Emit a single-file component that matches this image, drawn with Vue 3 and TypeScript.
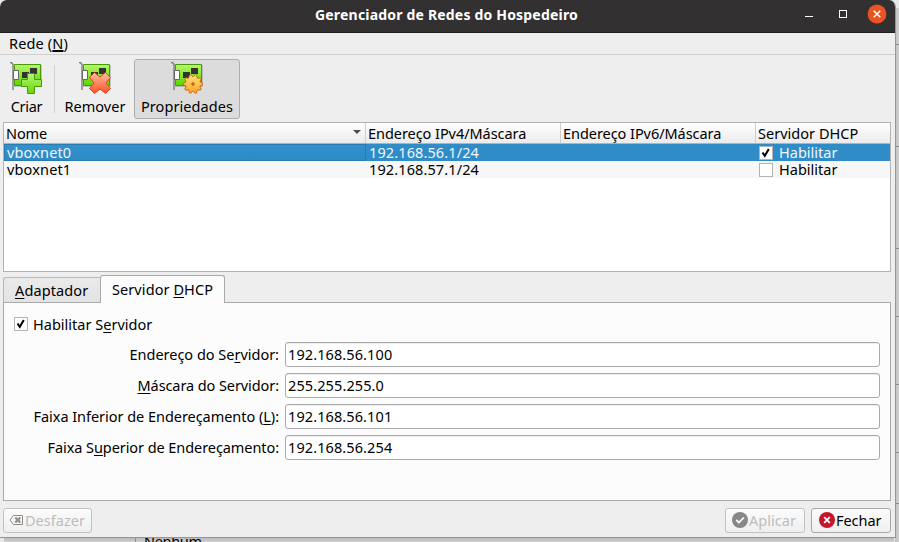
<script setup lang="ts">
import { ref } from 'vue'

interface Network { name: string; ipv4: string; enabled: boolean }
interface Field { pre: string; key: string; post: string; width: number; value: string; valueWidth: number }

const networks = ref<Network[]>([
  { name: 'vboxnet0', ipv4: '192.168.56.1/24', enabled: true },
  { name: 'vboxnet1', ipv4: '192.168.57.1/24', enabled: false },
])
const selected = ref(0)
const serverEnabled = ref(true)
const fields = ref<Field[]>([
  { pre: 'Endereço do Se', key: 'r', post: 'vidor:', width: 149.5, value: '192.168.56.100', valueWidth: 104.3 },
  { pre: '', key: 'M', post: 'áscara do Servidor:', width: 141.5, value: '255.255.255.0', valueWidth: 96 },
  { pre: 'Faixa Inferior de Endereçamento (', key: 'L', post: '):', width: 245.5, value: '192.168.56.101', valueWidth: 104.3 },
  { pre: 'Faixa S', key: 'u', post: 'perior de Endereçamento:', width: 231.5, value: '192.168.56.254', valueWidth: 104.3 },
])
const rules = [44, 146, 248, 316, 384, 452, 503]

// Outline of a cog with ten blunt teeth, centred on (22, 22).
const teeth = 10
const cog = 'M' + Array.from({ length: teeth * 4 }, (_, i) => {
  const radius = i % 4 < 2 ? 9.6 : 7.6
  const angle = ((i - 0.5) / (teeth * 4)) * Math.PI * 2
  return `${(22 + radius * Math.cos(angle)).toFixed(2)} ${(22 + radius * Math.sin(angle)).toFixed(2)}`
}).join('L') + 'Z'

// Tracks a label so that it takes the given advance width.
const vFit = {
  mounted(el: HTMLElement, binding: { value: number }) {
    const count = (el.textContent ?? '').length
    const natural = el.getBoundingClientRect().width
    el.style.letterSpacing = `${(binding.value - natural) / count}px`
  },
}
</script>

<template>
  <div class="screen">
    <svg class="desktop" width="899" height="542">
      <defs>
        <linearGradient id="shadeR"><stop offset="0" stop-color="#bdbdbd" /><stop offset="1" stop-color="#d2d2d2" /></linearGradient>
        <linearGradient id="shadeB" x2="0" y2="1"><stop offset="0" stop-color="#b5b5b5" /><stop offset="1" stop-color="#cfcfcf" /></linearGradient>
      </defs>
      <rect width="899" height="542" fill="#e8e8e8" />
      <rect x="895" y="8" width="4" height="534" fill="url(#shadeR)" />
      <rect x="4" y="537" width="890" height="5" fill="url(#shadeB)" />
      <rect v-for="y in rules" :key="y" x="895" :y="y" width="4" height="1" fill="#8e8e8e" />
      <rect x="135" y="537" width="1" height="5" fill="#8e8e8e" />
      <text x="144" y="547" textLength="58">Nenhum</text>
    </svg>

    <main class="window">
      <header class="titlebar">
        <span v-fit="263" class="t title">Gerenciador de Redes do Hospedeiro</span>
        <svg class="controls" width="90" height="28" viewBox="0 0 90 28">
          <path d="M5 16.500h8" stroke="#fff" />
          <rect x="39.500" y="10.500" width="7" height="7" fill="none" stroke="#fff" />
          <circle cx="77" cy="14" r="9.400" fill="#e95420" />
          <path d="M73.700 10.700l6.600 6.600m0-6.600l-6.600 6.600" stroke="#fff" stroke-width="1.500" />
        </svg>
      </header>

      <nav class="menubar"><span v-fit="59" class="t menu">Rede (<u>N</u>)</span></nav>

      <svg width="0" height="0" class="defs">
        <defs>
          <linearGradient id="card" x2="0" y2="1"><stop offset="0" stop-color="#b4f766" /><stop offset="1" stop-color="#5fd400" /></linearGradient>
          <linearGradient id="plus" x2="0" y2="1"><stop offset="0" stop-color="#b8f57c" /><stop offset="1" stop-color="#66d800" /></linearGradient>
          <linearGradient id="red" x2="0" y2="1"><stop offset="0" stop-color="#ffbfa0" /><stop offset="1" stop-color="#ff5028" /></linearGradient>
          <linearGradient id="gold" x2="0" y2="1"><stop offset="0" stop-color="#ffe680" /><stop offset="1" stop-color="#ffa024" /></linearGradient>
          <symbol id="nic" viewBox="0 0 32 32">
            <path d="M4 3h28v22H4z" fill="#8b978b" opacity=".45" />
            <path d="M4.500 2.500h26v21h-26z" fill="url(#card)" stroke="#479b0b" />
            <path d="M0 .5h1.500l1.500 2V28" fill="none" stroke="#777" stroke-width="1.300" />
            <path d="M3.500 8.500h5v9h-5z" fill="#fff" stroke="#666" />
            <path d="M20 6h7v6h-7zM12 10h7v6h-7z" fill="#333" />
          </symbol>
        </defs>
      </svg>

      <section class="toolbar">
        <button class="tool create">
          <svg class="ico" width="32" height="32" viewBox="0 0 32 32"><use href="#nic" width="32" height="32" /><path d="M17.500 11.500h7v6h7v7h-7v7h-7v-7h-6v-7h6z" fill="url(#plus)" stroke="#479b0b" /></svg>
          <span v-fit="32.5" class="t">Criar</span>
        </button>
        <i class="sep" />
        <button class="tool remove">
          <svg class="ico" width="32" height="32" viewBox="0 0 32 32"><use href="#nic" width="32" height="32" /><path d="M15.500 10.500L21 15l5.500-4.500 5 5L27 21l4.500 5.500-5 5L21 27l-5.500 4.500-5-5L15 21l-4.500-5.500z" fill="url(#red)" stroke="#d9431a" stroke-linejoin="round" /></svg>
          <span v-fit="61" class="t">Remover</span>
        </button>
        <button class="tool props">
          <svg class="ico" width="32" height="32" viewBox="0 0 32 32">
            <use href="#nic" width="32" height="32" />
            <path :d="cog" fill="url(#gold)" stroke="#d35b0c" stroke-width=".9" stroke-linejoin="round" />
            <circle cx="22" cy="22" r="1.700" fill="#d35b0c" />
          </svg>
          <span v-fit="92" class="t">Propriedades</span>
        </button>
      </section>

      <section class="table">
        <div class="row head">
          <div class="cell"><span v-fit="41" class="t">Nome</span><i class="arrow" /></div>
          <div class="cell"><span v-fit="158.3" class="t">Endereço IPv4/Máscara</span></div>
          <div class="cell"><span v-fit="158.3" class="t">Endereço IPv6/Máscara</span></div>
          <div class="cell"><span v-fit="100.3" class="t">Servidor DHCP</span></div>
        </div>
        <div v-for="(n, i) in networks" :key="n.name" class="row item" :class="{ selected: i === selected }" @click="selected = i">
          <div class="cell"><span v-fit="64.3" class="t">{{ n.name }}</span></div>
          <div class="cell"><span v-fit="110" class="t">{{ n.ipv4 }}</span></div>
          <div class="cell" />
          <div class="cell">
            <span class="check" @click.stop="n.enabled = !n.enabled"><svg v-if="n.enabled" width="12" height="12" viewBox="0 0 12 12"><path d="M2.500 5.500l2.300 3.300L8.800 2" /></svg></span>
            <span v-fit="58.5" class="t">Habilitar</span>
          </div>
        </div>
      </section>

      <div class="tabs">
        <div class="tab"><span v-fit="73.3" class="t"><u>A</u>daptador</span></div>
        <div class="tab active"><span v-fit="101" class="t">Servidor <u>D</u>HCP</span></div>
      </div>
      <section class="pane">
        <label class="enable" @click="serverEnabled = !serverEnabled">
          <span class="check"><svg v-if="serverEnabled" width="12" height="12" viewBox="0 0 12 12"><path d="M2.500 5.500l2.300 3.300L8.800 2" /></svg></span>
          <span v-fit="119.300" class="t">Habilitar S<u>e</u>rvidor</span>
        </label>
        <div v-for="f in fields" :key="f.pre" class="field">
          <div class="label"><span v-fit="f.width" class="t">{{ f.pre }}<u>{{ f.key }}</u>{{ f.post }}</span></div>
          <div class="input"><span v-fit="f.valueWidth" class="t">{{ f.value }}</span></div>
        </div>
      </section>

      <footer class="actions">
        <button class="btn undo disabled">
          <svg width="15" height="12" viewBox="0 0 15 12"><path d="M4.500 1.500h9v9h-9L1 6z" fill="none" stroke="#8c8c8c" /><path d="M6.300 3.500l5 5m0-5l-5 5" stroke="#8c8c8c" stroke-width="2" /></svg>
          <span v-fit="60" class="t">Desfazer</span>
        </button>
        <button class="btn apply disabled">
          <svg width="16" height="16" viewBox="0 0 16 16"><circle cx="8" cy="8" r="8" fill="#888" /><path d="M4.200 7.800l2.700 2.700 5-5" fill="none" stroke="#fff" stroke-width="1.700" /></svg>
          <span v-fit="47" class="t">Aplicar</span>
        </button>
        <button class="btn close">
          <svg width="16" height="16" viewBox="0 0 16 16"><circle cx="8" cy="8" r="8" fill="#c7162b" /><path d="M5.200 5.200l5.600 5.600m0-5.600l-5.600 5.600" stroke="#fff" stroke-width="1.800" /></svg>
          <span v-fit="45.5" class="t">Fechar</span>
        </button>
      </footer>
    </main>
  </div>
</template>

<style>
body { overflow: hidden; }
</style>

<style scoped>
* { box-sizing: border-box; }
.screen { position: relative; width: 899px; height: 542px; overflow: hidden; font: 14.5px/20px "Noto Sans", "Open Sans", sans-serif; color: #000; }
.desktop { position: absolute; left: 0; top: 0; display: block; }
.t { display: inline-block; flex: none; white-space: pre; }
u { text-decoration: underline; text-decoration-thickness: 1px; text-underline-offset: 2px; text-decoration-skip-ink: none; }
button { font: inherit; color: inherit; margin: 0; }
.window { position: relative; width: 896px; height: 538px; display: flex; flex-direction: column; background: #eee; border-right: 1px solid #969696; border-bottom: 1px solid #969696; border-radius: 7px 7px 0 0; overflow: hidden; }
.titlebar { height: 33px; flex: none; position: relative; background: #333031; border-bottom: 1px solid #1f1e1e; color: #fff; display: flex; padding: 5px 0 0 315px; font-weight: 700; font-size: 14px; }
.controls { position: absolute; left: 800px; top: 0; }
.menubar { height: 22px; flex: none; border-bottom: 1px solid #d0d0d0; padding: 0 0 0 9px; }
.menu u { text-decoration-thickness: 2px; text-underline-offset: 1px; }
.defs { position: absolute; }
.toolbar { height: 67px; flex: none; display: flex; padding: 4px 3px 4px; }
.tool { height: 60px; padding: 2px 0 0; border: 1px solid transparent; border-radius: 3px; background: none; display: flex; flex-direction: column; align-items: center; }
.tool .t { margin-top: 2px; }
.create { width: 46px; }
.remove { width: 78px; }
.props { width: 106px; background: #dcdcdc; border-color: #adadad; }
.sep { width: 1px; height: 48px; margin: 6px 1px 0 5px; background: #d2d2d2; }
.create .t { padding-left: 1px; }
.table { height: 150px; flex: none; margin: 0 4px 0 3px; border: 1px solid #b3b3b3; background: #fff; }
.row { display: grid; grid-template-columns: 362px 195px 195px 1fr; grid-template-rows: 17px; height: 17px; }
.cell { display: flex; align-items: center; min-width: 0; padding-left: 3px; }
.item { line-height: 17px; }
.row.head { height: 21px; grid-template-rows: 20px; background: linear-gradient(#fff, #ebebeb); border-bottom: 1px solid #b3b3b3; }
.head .cell { padding-left: 2px; }
.head .cell:not(:last-child) { border-right: 1px solid #cecece; }
.arrow { margin: -3px 4px 0 auto; border: 4px solid transparent; border-top-color: #4d4d4d; border-bottom: 0; }
.item:nth-child(odd) { background: #f7f7f7; }
.row.selected { background: #308cc6; color: #eff7fc; }
.row.selected .cell:first-child { background: linear-gradient(#3291cf, #2e89c2); box-shadow: inset 0 0 0 1px #2a7bae; }
.check { width: 14px; height: 14px; flex: none; display: block; border: 1px solid #b4b4b4; background: #fff; }
.check svg { display: block; }
.check path { fill: none; stroke: #000; stroke-width: 2; }
.item .check { margin-right: 6px; }
.tabs { height: 28px; flex: none; margin: 3px 4px 0 3px; display: flex; align-items: flex-end; }
.tab { height: 25px; width: 97px; margin-bottom: 1px; padding: 2px 0 0 11px; border: 1px solid #b8b8b8; border-right: 0; border-bottom: 0; border-radius: 3px 0 0; background: linear-gradient(#eaeaea, #e3e3e3); }
.tab.active { height: 28px; width: 125px; margin-bottom: 0; padding-top: 3px; position: relative; background: #fcfcfc; border: 1px solid #a9a9a9; border-bottom: 0; border-radius: 3px 3px 0 0; z-index: 1; }
.pane { height: 199px; flex: none; margin: -1px 4px 0 3px; padding: 11px 10px 0; border: 1px solid #a9a9a9; background: #fcfcfc; display: flex; flex-direction: column; }
.enable { display: flex; align-items: center; height: 20px; margin-bottom: 8px; gap: 5px; }
.field { display: flex; height: 25px; margin-bottom: 6px; }
.label { width: 265px; display: flex; justify-content: flex-end; padding-top: 2px; }
.input { flex: 1; margin-left: 6px; padding: 1px 0 0 2px; background: #fff; border: 1px solid #aaa; border-radius: 3px; box-shadow: inset 0 1px #ededed; }
.actions { display: flex; margin: 7px 4px 0 3px; height: 25px; }
.btn { height: 25px; padding: 0 0 1px 7px; display: flex; align-items: center; border: 1px solid #a8a8a8; border-radius: 3px; background: linear-gradient(#fcfcfc, #efefef); gap: 1px; }
.btn.disabled { border-color: #c2c2c2; color: #bdbdbd; }
.undo { width: 89px; padding-left: 5px; }
.apply { width: 80px; margin-left: auto; margin-right: 6px; padding-left: 6px; }
.close { width: 80px; }
</style>
